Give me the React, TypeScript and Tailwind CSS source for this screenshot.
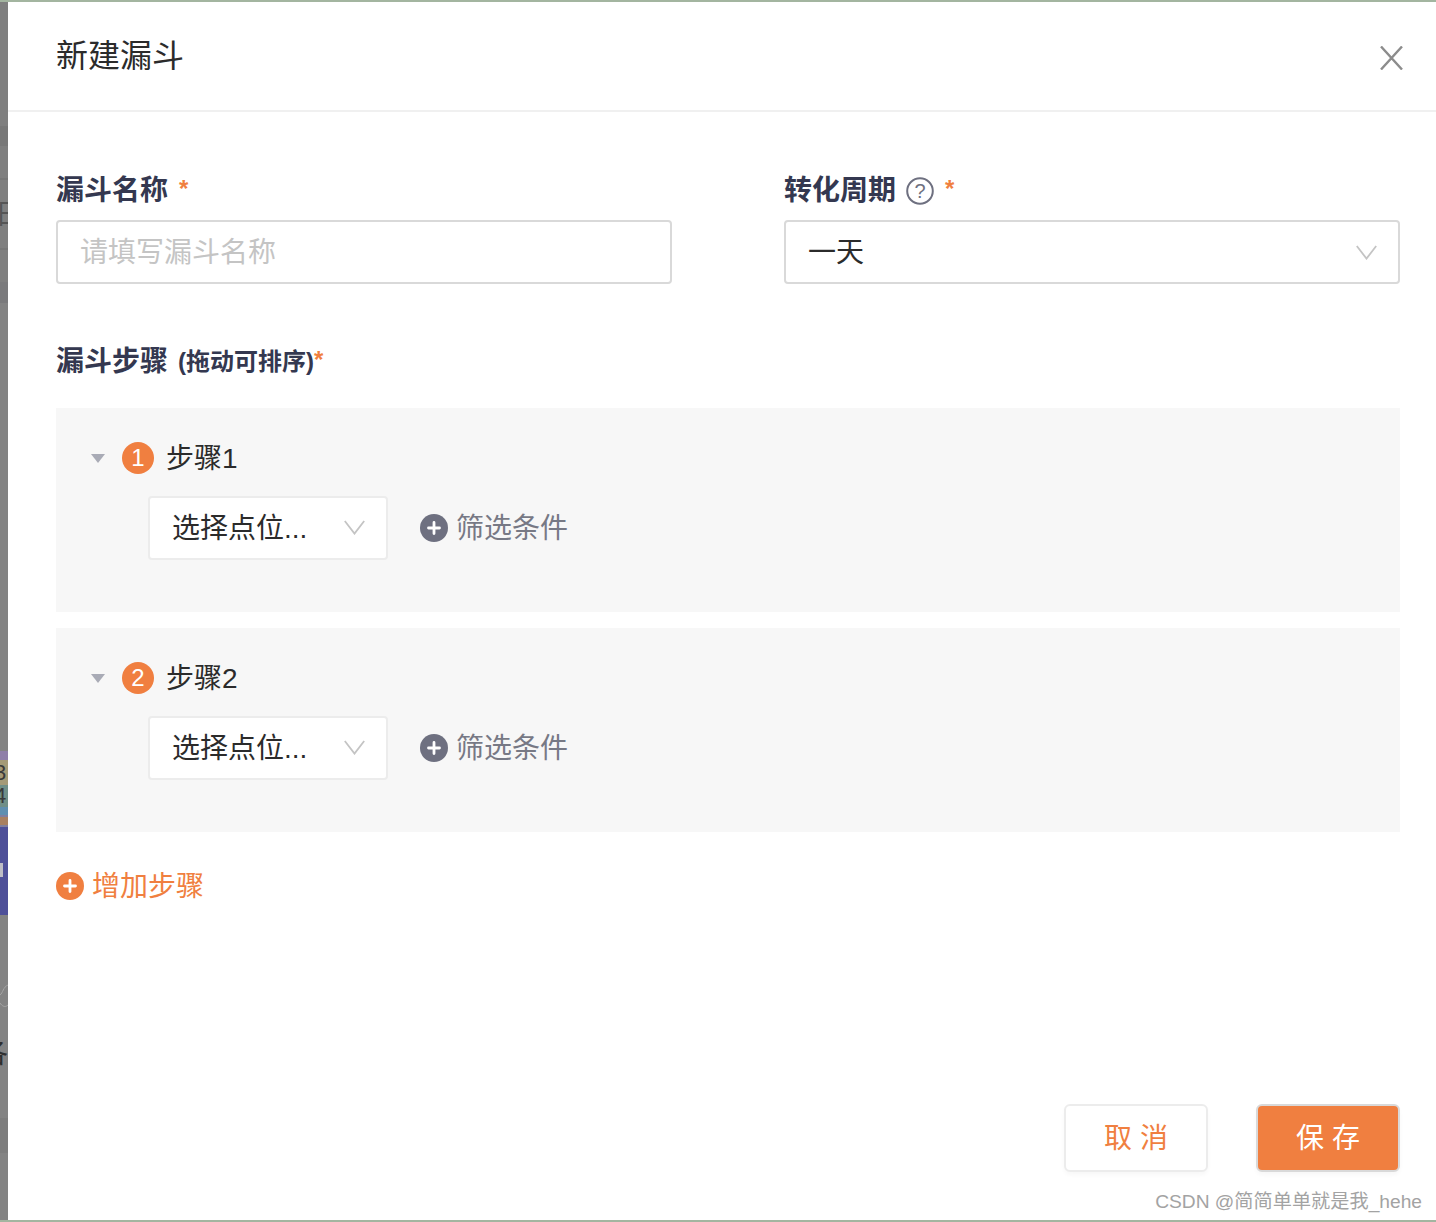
import React from "react";

const FONT = "font-['Liberation_Sans','Noto_Sans_CJK_SC',sans-serif]";

function Chevron() {
  return (
    <svg viewBox="0 0 21 15" className="-mt-0.5 h-[15px] w-[21px] shrink-0" fill="none" stroke="#c4c4c4" strokeWidth="1.8">
      <path d="M0.8 1 L10.5 13.6 L20.2 1" />
    </svg>
  );
}

function PlusCircle({ bg }: { bg: string }) {
  return (
    <span className={`flex h-7 w-7 shrink-0 items-center justify-center rounded-full ${bg}`}>
      <svg viewBox="0 0 14 14" className="h-3.5 w-3.5" stroke="#fff" strokeWidth="2.8" strokeLinecap="round">
        <path d="M7 1.5 V12.5 M1.5 7 H12.5" />
      </svg>
    </span>
  );
}

function Step({ n, spacing }: { n: number; spacing: string }) {
  return (
    <section className={`h-[204px] bg-[#f7f7f7] pl-[35px] pt-[34px] ${spacing}`}>
      <div className="flex h-8 items-center">
        <svg viewBox="0 0 14 9" className="h-[9px] w-[14px]" fill="#a9abb6">
          <path d="M0 0 H14 L7 9 Z" />
        </svg>
        <span className="ml-[17px] flex h-8 w-8 items-center justify-center rounded-full bg-[#f07f40] text-[24px] text-white">
          {n}
        </span>
        <span className="ml-3 pt-0.5 text-[28px] leading-8 text-[#2b2b2b]">步骤{n}</span>
      </div>
      <div className="ml-[57px] mt-[22px] flex items-center">
        <div className="flex h-16 w-[240px] items-center justify-between rounded border-2 border-[#ececec] bg-white pl-[22px] pr-[21px]">
          <span className="pt-0.5 text-[28px] text-[#2b2b2b]">选择点位...</span>
          <Chevron />
        </div>
        <div className="ml-8 flex items-center gap-2">
          <PlusCircle bg="bg-[#6e7080]" />
          <span className="pt-0.5 text-[28px] text-[#777985]">筛选条件</span>
        </div>
      </div>
    </section>
  );
}

function LeftStrip() {
  return (
    <aside className="flex w-2 shrink-0 flex-col overflow-hidden bg-[#838383]">
      <div className="h-[124px] bg-[#7f7f7f]" />
      <div className="h-5 bg-[#787878]" />
      <div className="h-[34px] border-b-2 border-[#777777] bg-[#7f7f7f]" />
      <div className="h-5 bg-[#7f7f7f]" />
      <div className="h-[30px] overflow-hidden bg-[#7f7f7f] text-[28px] leading-[30px] text-[#555555]">
        <span className="-ml-[5px] block w-7">日</span>
      </div>
      <div className="h-5 border-b-2 border-[#777777] bg-[#7f7f7f]" />
      <div className="h-8 bg-[#7f7f7f]" />
      <div className="h-[21px] bg-[#7a7a7c]" />
      <div className="h-[448px]" />
      <div className="h-[9px] bg-[#8f7fa8]" />
      <div className="h-[25px] overflow-hidden bg-[#a49a77] text-[22px] leading-[25px] text-[#3a3a3a]">
        <span className="-ml-1.5 block w-4">3</span>
      </div>
      <div className="h-[22px] overflow-hidden bg-[#6f8f88] text-[22px] leading-[22px] text-[#3a3a3a]">
        <span className="-ml-1.5 block w-4">4</span>
      </div>
      <div className="h-2 bg-[#5f8fb0]" />
      <div className="h-0.5 bg-[#7f7f9f]" />
      <div className="h-2 bg-[#a88060]" />
      <div className="h-0.5 bg-[#7f7f9f]" />
      <div className="h-[88px] bg-[#4e5099] pt-9">
        <div className="h-[14px] w-[3px] bg-[#bdbdc5]" />
      </div>
      <div className="h-[69px]" />
      <svg viewBox="0 0 8 25" className="h-[25px] w-2 shrink-0" fill="none" stroke="#a5a5a5" strokeWidth="1">
        <path d="M8 1 C3 3 3 9 0 11 M8 21 C5 24 2 22 0 19" />
      </svg>
      <div className="h-[31px]" />
      <div className="h-[28px] overflow-hidden text-[28px] leading-7 text-[#2f2f2f]">
        <span className="-ml-5 block w-7">各</span>
      </div>
      <div className="h-[50px]" />
      <div className="h-[35px] bg-[#7d7d7d]" />
    </aside>
  );
}

export default function App() {
  return (
    <div className={`flex h-[1222px] w-[1436px] flex-col overflow-hidden bg-white ${FONT}`}>
      <div className="h-0.5 shrink-0 bg-[#a3b5a0]" />
      <div className="flex min-h-0 flex-1">
        <LeftStrip />
        <main className="relative flex min-w-0 flex-1 flex-col">
          <header className="flex h-[110px] shrink-0 items-start justify-between border-b-2 border-[#f0f0f0] pl-12 pr-[33px]">
            <h1 className="mt-[34px] text-[32px] leading-10 text-[#2b2b2b]">新建漏斗</h1>
            <svg viewBox="0 0 23 24" className="mt-[44px] h-6 w-[23px]" stroke="#8c8c8c" strokeWidth="2.4" fill="none">
              <path d="M1 0.5 L22 23.5 M22 0.5 L1 23.5" />
            </svg>
          </header>

          <div className="flex flex-1 flex-col pl-12 pr-9">
            <div className="mt-[59px] grid grid-cols-2 gap-x-28">
              <div>
                <label className="flex h-10 items-center text-[28px] font-bold text-[#343850]">
                  漏斗名称<span className="ml-[11px] -mt-1 text-[24px] text-[#f07f40]">*</span>
                </label>
                <div className="mt-[9px] flex h-16 items-center rounded border-2 border-[#d9d9d9] px-[22px] pt-0.5 text-[28px] text-[#c4c4c4]">
                  请填写漏斗名称
                </div>
              </div>
              <div>
                <label className="flex h-10 items-center text-[28px] font-bold text-[#343850]">
                  转化周期
                  <svg viewBox="0 0 28 28" className="ml-[10px] h-7 w-7" fill="none">
                    <circle cx="14" cy="14" r="12.8" stroke="#6e7080" strokeWidth="2" />
                    <text x="14" y="21" textAnchor="middle" fontSize="20" fill="#6e7080" fontWeight="400">?</text>
                  </svg>
                  <span className="ml-[11px] -mt-1 text-[24px] text-[#f07f40]">*</span>
                </label>
                <div className="mt-[9px] flex h-16 items-center justify-between rounded border-2 border-[#d9d9d9] pl-[22px] pr-[21px] pt-0.5 text-[28px] text-[#2b2b2b]">
                  一天
                  <Chevron />
                </div>
              </div>
            </div>

            <div className="mt-[58px] flex h-10 items-center text-[28px] font-bold text-[#343850]">
              漏斗步骤
              <span className="ml-[10px] text-[24px]">(拖动可排序)</span>
              <span className="-mt-1 text-[24px] text-[#f07f40]">*</span>
            </div>

            <div className="mt-[26px]">
              <Step n={1} spacing="mb-4" />
              <Step n={2} spacing="" />
            </div>

            <div className="mt-10 flex h-7 items-center gap-2 text-[28px] text-[#f07f40]">
              <PlusCircle bg="bg-[#f07f40]" />
              <span className="pt-0.5">增加步骤</span>
            </div>

            <div className="mt-[204px] flex justify-end gap-12">
              <button className="h-[68px] w-36 rounded-md border-2 border-[#ececec] bg-white pt-0.5 text-[28px] text-[#f07f40] shadow-[0_3px_4px_rgba(0,0,0,0.03)]">
                取 消
              </button>
              <button className="h-[68px] w-36 rounded-md border-2 border-[#d9d9d9] bg-[#f07f40] pt-0.5 text-[28px] text-white shadow-[0_3px_4px_rgba(0,0,0,0.03)]">
                保 存
              </button>
            </div>
          </div>

          <span className="absolute bottom-[6px] right-[14px] text-[19.2px] leading-6 text-[#a3a3a3]">
            CSDN @简简单单就是我_hehe
          </span>
        </main>
      </div>
      <div className="h-0.5 shrink-0 bg-[#a3b5a0]" />
    </div>
  );
}
